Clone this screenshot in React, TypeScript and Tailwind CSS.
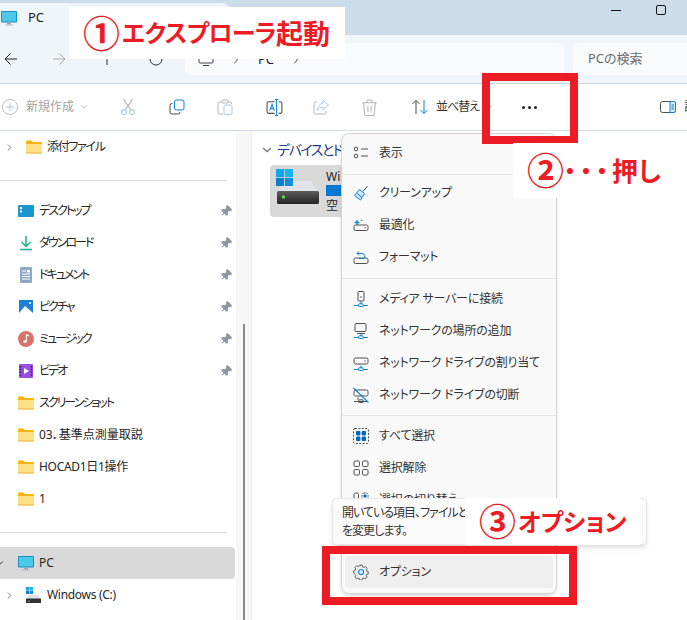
import type { ReactNode } from 'react';
import { ChevronDown, ChevronRight, Pin } from 'lucide-react';

const FONT = "[font-family:'Noto_Sans','Noto_Sans_CJK_JP',sans-serif] [font-feature-settings:'palt']";
const BLUE = '#0a84d8';
const GRAY = '#4f4f4f';

function Ico({ size = 16, children, className }: { size?: number; children: ReactNode; className?: string }) {
    return (
        <svg width={size} height={size} viewBox="0 0 16 16" fill="none" strokeWidth="1" className={`shrink-0 ${className ?? ''}`}>
            {children}
        </svg>
    );
}

function Folder({ size = 16 }: { size?: number }) {
    return (
        <Ico size={size}>
            <path d="M0 2.5C0 2 .4 1.5 1 1.5h4.5L7 3h8c.6 0 1 .4 1 1v1H0z" fill="#f6b40e" />
            <path d="M0 5h16v8.5c0 .6-.4 1-1 1H1c-.6 0-1-.4-1-1z" fill="#fddf86" />
            <path d="M0 13.5h16v.2c0 .5-.4.8-1 .8H1c-.6 0-1-.3-1-.8z" fill="#e9b64a" />
        </Ico>
    );
}

function Monitor({ size = 16 }: { size?: number }) {
    return (
        <Ico size={size}>
            <rect x="0" y="1" width="16" height="11.5" rx="1" fill="#1493c9" />
            <rect x="1" y="2" width="14" height="9.5" fill="#4cc8e8" />
            <rect x="6" y="12.5" width="4" height="2" fill="#9aa5ad" />
            <rect x="4" y="14.5" width="8" height="1" fill="#b6bec4" />
        </Ico>
    );
}

function WinLogo({ size = 16 }: { size?: number }) {
    return (
        <Ico size={size}>
            <rect x="0" y="0" width="7.6" height="7.6" fill="#12a5e8" />
            <rect x="8.4" y="0" width="7.6" height="7.6" fill="#19b3ef" />
            <rect x="0" y="8.4" width="7.6" height="7.6" fill="#0a7fd0" />
            <rect x="8.4" y="8.4" width="7.6" height="7.6" fill="#0f90dc" />
        </Ico>
    );
}

function Drive() {
    return (
        <svg width="42" height="24" viewBox="0 0 42 24" className="shrink-0">
            <defs>
                <linearGradient id="driveBody" x1="0" y1="0" x2="0" y2="1">
                    <stop offset="0%" stopColor="#5c5c5c" />
                    <stop offset="100%" stopColor="#242424" />
                </linearGradient>
            </defs>
            <path d="M7 0h27l7 11H0z" fill="#e2e4ea" />
            <rect x="0" y="10" width="42" height="13" rx="1.5" fill="url(#driveBody)" />
            <circle cx="6.5" cy="16" r="1.7" fill="#4fe04a" />
        </svg>
    );
}

const TinyDrive = () => (
    <svg width="15" height="8" viewBox="0 0 15 8" className="shrink-0">
        <path d="M3 0h9l3 4H0z" fill="#dfe2e6" />
        <rect x="0" y="3.5" width="15" height="4.5" rx=".6" fill="#333" />
        <circle cx="3" cy="6" r=".8" fill="#4fe04a" />
    </svg>
);

const Net = () => (
    <>
        <path d="M8 10.5V13M1 14.5h4.5M10.5 14.5H15" stroke={BLUE} />
        <rect x="5.8" y="12.8" width="4.4" height="2.8" rx=".5" stroke={BLUE} />
    </>
);

const menuIcons: Record<string, ReactNode> = {
    view: (
        <>
            <circle cx="3" cy="4" r="1.8" stroke={GRAY} />
            <circle cx="3" cy="11" r="1.8" stroke={GRAY} />
            <path d="M8 4h7M8 11h7" stroke={GRAY} />
        </>
    ),
    clean: (
        <>
            <path d="M10 6.5 14.5 1" stroke={GRAY} />
            <path d="M6.5 4.5l5 4-4 6.5-6-4.5z" stroke={BLUE} fill="#cfe7fa" />
            <path d="M4 8.5l5 4" stroke={BLUE} />
        </>
    ),
    optimize: (
        <>
            <rect x="1" y="8" width="14" height="5.5" rx="1.5" stroke={GRAY} />
            <circle cx="12" cy="10.7" r=".7" fill={GRAY} />
            <path d="M4 3v5M1.5 5.5h5" stroke={BLUE} strokeWidth="1.3" />
            <path d="M8 3.5h1.5" stroke={BLUE} />
        </>
    ),
    format: (
        <>
            <rect x="1" y="9" width="14" height="5.5" rx="1.5" stroke={GRAY} />
            <path d="M4 4.5h5a3 3 0 0 1 2 5H6M4 4.5l2-2M4 4.5l2 2" stroke={BLUE} />
        </>
    ),
    media: (
        <>
            <rect x="5" y="0.5" width="6" height="9.5" rx="1" stroke={GRAY} />
            <circle cx="8" cy="6" r=".8" fill={GRAY} />
            <Net />
        </>
    ),
    place: (
        <>
            <rect x="2" y="0.5" width="11" height="8" rx="1" stroke={GRAY} />
            <path d="M4 10.5h8" stroke={GRAY} />
            <Net />
        </>
    ),
    map: (
        <>
            <rect x="1" y="3" width="14" height="6" rx="1.5" stroke={GRAY} />
            <circle cx="12" cy="6" r=".7" fill={GRAY} />
            <Net />
        </>
    ),
    cut: (
        <>
            <rect x="1" y="3" width="14" height="6" rx="1.5" stroke={GRAY} />
            <path d="M5 10.5V13M1 14.5h14" stroke={GRAY} />
            <rect x="5.8" y="12.8" width="4.4" height="2.8" rx=".5" stroke={GRAY} />
            <path d="M0.5 1 15.5 15.5" stroke={BLUE} strokeWidth="1.1" />
        </>
    ),
    all: (
        <>
            <rect x="0.5" y="0.5" width="15" height="15" rx="1.5" stroke={GRAY} strokeDasharray="2 1.4" />
            <rect x="3" y="3" width="4.4" height="4.4" rx="1" fill="#0067c0" />
            <rect x="8.6" y="3" width="4.4" height="4.4" rx="1" fill="#0067c0" />
            <rect x="3" y="8.6" width="4.4" height="4.4" rx="1" fill="#0067c0" />
            <rect x="8.6" y="8.6" width="4.4" height="4.4" rx="1" fill="#0067c0" />
        </>
    ),
    none: (
        <>
            <rect x="1" y="1" width="5.5" height="5.5" rx="1.2" stroke={GRAY} />
            <rect x="9.5" y="1" width="5.5" height="5.5" rx="1.2" stroke={GRAY} />
            <rect x="1" y="9.5" width="5.5" height="5.5" rx="1.2" stroke={GRAY} />
            <rect x="9.5" y="9.5" width="5.5" height="5.5" rx="1.2" stroke={GRAY} />
        </>
    ),
    invert: (
        <>
            <rect x="1" y="1" width="4.5" height="5.5" rx="1.5" stroke={GRAY} />
            <rect x="9" y="1" width="6" height="6" rx="2" stroke={GRAY} strokeDasharray="1.5 1" />
            <rect x="10.5" y="2.5" width="3" height="3" rx="1" fill="#0067c0" />
            <rect x="2" y="9.5" width="3.5" height="3.5" rx="1" fill="#0067c0" />
            <rect x="9.5" y="9.5" width="5.5" height="5.5" rx="1.2" stroke={GRAY} />
        </>
    ),
};

function Gear() {
    return (
        <Ico>
            <path
                d="M6.6 1h2.8l.4 1.9 1.4.6 1.6-1 2 2-1 1.6.6 1.4 1.6.5v2.8l-1.6.4-.6 1.4 1 1.6-2 2-1.6-1-1.4.6-.4 1.7H6.6l-.4-1.7-1.4-.6-1.6 1-2-2 1-1.6-.6-1.4L0 9.8V7l1.6-.5.6-1.4-1-1.6 2-2 1.6 1 1.4-.6z"
                stroke={GRAY}
                transform="translate(.8 .3) scale(.9)"
            />
            <circle cx="8" cy="8" r="2.5" stroke={BLUE} strokeWidth="1.2" />
        </Ico>
    );
}

function MenuRow({ icon, label, active }: { icon: ReactNode; label: string; active?: boolean }) {
    return (
        <div className={`flex h-8 items-center gap-[10px] rounded pl-2 ${active ? 'bg-[#efefef]' : ''}`}>
            {icon}
            <span className="whitespace-nowrap text-xs tracking-[-0.2px] text-[#333]">{label}</span>
        </div>
    );
}

function Sep({ className }: { className: string }) {
    return (
        <div className={className}>
            <div className="-mx-[3px] h-px bg-[#e6e6e6]" />
        </div>
    );
}

function ContextMenu() {
    const row = (key: string, label: string) => <MenuRow icon={<Ico>{menuIcons[key]}</Ico>} label={label} />;
    return (
        <div className="absolute left-[341px] top-[133px] h-[461px] w-[216px] rounded-lg border border-[#d4d4d4] bg-[#f9f9f9] px-[3px] pt-[3px] shadow-md">
            {row('view', '表示')}
            <Sep className="pb-[2px] pt-[5px]" />
            {row('clean', 'クリーンアップ')}
            {row('optimize', '最適化')}
            {row('format', 'フォーマット')}
            <Sep className="pb-[4px] pt-[5px]" />
            {row('media', 'メディア サーバーに接続')}
            {row('place', 'ネットワークの場所の追加')}
            {row('map', 'ネットワーク ドライブの割り当て')}
            {row('cut', 'ネットワーク ドライブの切断')}
            <Sep className="pb-[4px] pt-[4px]" />
            {row('all', 'すべて選択')}
            {row('none', '選択解除')}
            {row('invert', '選択の切り替え')}
            <div className="h-[40px]" />
            <MenuRow icon={<Gear />} label="オプション" active />
        </div>
    );
}

function ToolIcon({ children, className }: { children: ReactNode; className: string }) {
    return <div className={`flex shrink-0 justify-center ${className}`}>{children}</div>;
}

function Toolbar() {
    const dim = '#b4b4b4';
    const light = '#a9cbe6';
    return (
        <div className="flex h-[47px] shrink-0 items-center border-b border-[#cfdbe5] bg-white">
            <svg width="18" height="18" viewBox="0 0 18 18" fill="none" className="ml-px shrink-0">
                <circle cx="9" cy="9" r="7.5" stroke="#bdbdbd" />
                <path d="M9 5v8M5 9h8" stroke={light} />
            </svg>
            <span className="ml-[7px] whitespace-nowrap text-xs text-[#a3a3a3]">新規作成</span>
            <ChevronDown size={10} className="ml-[5px] shrink-0 text-[#a3a3a3]" />
            <div className="ml-[14px] h-8 w-px bg-[#e4e4e4]" />
            <ToolIcon className="ml-[13px] w-[24px]">
                <Ico size={18}>
                    <path d="M4 1l6 9M12 1 6 10" stroke={dim} />
                    <circle cx="4.5" cy="12.5" r="2.2" stroke={light} />
                    <circle cx="11.5" cy="12.5" r="2.2" stroke={light} />
                </Ico>
            </ToolIcon>
            <ToolIcon className="ml-[25px] w-[24px]">
                <Ico size={16}>
                    <rect x="5.5" y="1" width="9.5" height="10" rx="2" stroke="#0a84d8" />
                    <path d="M3.5 4.5H3A2 2 0 0 0 1 6.5V13a2 2 0 0 0 2 2h6a2 2 0 0 0 2-2" stroke={GRAY} />
                </Ico>
            </ToolIcon>
            <ToolIcon className="ml-[24px] w-[24px]">
                <Ico size={16}>
                    <path d="M5 3H2.5A1.5 1.5 0 0 0 1 4.5V13.5A1.5 1.5 0 0 0 2.5 15H6M11 3h2.5a1 1 0 0 1 1 1v1" stroke={dim} />
                    <rect x="5" y="1" width="6" height="3" rx="1" stroke={dim} />
                    <rect x="7" y="6" width="8" height="9.5" rx="1.5" stroke={light} />
                </Ico>
            </ToolIcon>
            <ToolIcon className="ml-[25px] w-[24px]">
                <Ico size={17}>
                    <path d="M8 2.5H2.5A1.5 1.5 0 0 0 1 4v8a1.5 1.5 0 0 0 1.5 1.5H8M12 2.5h1.5A1.5 1.5 0 0 1 15 4v8a1.5 1.5 0 0 1-1.5 1.5H12" stroke={GRAY} />
                    <path d="M10 .5V15.5M8.5.5h3M8.5 15.5h3" stroke={BLUE} />
                    <path d="M3.5 11l2.2-6 2.2 6M4.3 9h2.8" stroke={BLUE} />
                </Ico>
            </ToolIcon>
            <ToolIcon className="ml-[23px] w-[24px]">
                <Ico size={16}>
                    <path d="M4 3H2.5A1.5 1.5 0 0 0 1 4.5v9A1.5 1.5 0 0 0 2.5 15h9a1.5 1.5 0 0 0 1.5-1.5V12" stroke={dim} />
                    <path d="M10 1.5 15.5 6 10 10.5V8C7.5 8 5.5 9 4.5 11.5 4.5 7.5 7 4.5 10 4z" stroke={light} />
                </Ico>
            </ToolIcon>
            <ToolIcon className="ml-[24px] w-[24px]">
                <Ico size={17}>
                    <path d="M1 3.5h14M5.5 3.5V2a1 1 0 0 1 1-1h3a1 1 0 0 1 1 1v1.5M2.5 3.5l1 10.5a1.5 1.5 0 0 0 1.5 1.5h6a1.5 1.5 0 0 0 1.5-1.5l1-10.5M6.5 6.5v6M9.5 6.5v6" stroke={dim} />
                </Ico>
            </ToolIcon>
            <div className="ml-[14px] h-8 w-px bg-[#e4e4e4]" />
            <Ico size={16} className="ml-[17px]">
                <path d="M4 15V1.5M.5 5 4 1.5 7.5 5" stroke={GRAY} />
                <path d="M12 1v13.5M8.5 11l3.5 3.5 3.5-3.5" stroke={BLUE} />
            </Ico>
            <span className="ml-[8px] whitespace-nowrap text-xs tracking-[-1px] text-[#333]">並べ替え</span>
            <ChevronDown size={10} className="ml-[5px] shrink-0 text-[#888]" />
            <div className="ml-[28px] mt-[1px] flex shrink-0 gap-[3px]">
                <span className="size-[3px] rounded-full bg-[#222]" />
                <span className="size-[3px] rounded-full bg-[#222]" />
                <span className="size-[3px] rounded-full bg-[#222]" />
            </div>
            <Ico size={16} className="ml-[123px]">
                <rect x="0.5" y="2.5" width="15" height="11" rx="2" stroke={GRAY} />
                <path d="M10 2.5h3.5a2 2 0 0 1 2 2v7a2 2 0 0 1-2 2H10z" stroke={BLUE} fill="#d9edfb" />
                <path d="M11.5 6h2.5M11.5 8h2.5M11.5 10h2.5" stroke={BLUE} />
            </Ico>
            <span className="ml-[8px] whitespace-nowrap text-xs text-[#333]">詳細</span>
        </div>
    );
}

function NavRow({ icon, label, pinned, selected, chevron, track = '' }: { icon: ReactNode; label: string; pinned?: boolean; selected?: boolean; chevron?: boolean; track?: string }) {
    return (
        <div className={`flex h-8 items-center rounded-r ${selected ? 'bg-[#d9d9d9]' : ''} ${chevron ? 'pl-[5px]' : 'pl-[18px]'}`}>
            {chevron && <ChevronRight size={11} className="-ml-[1px] mr-[11px] shrink-0 text-[#777]" strokeWidth={2} />}
            {icon}
            <span className={`ml-[5px] flex-1 whitespace-nowrap text-xs text-[#262626] ${track}`}>{label}</span>
            {pinned && <Pin size={12} className="mr-[3px] shrink-0 rotate-45 fill-[#8d98a3] text-[#8d98a3]" />}
        </div>
    );
}

function Sidebar() {
    const div = (
        <div className="flex h-8 items-center pt-[2px]">
            <div className="h-px w-[227px] bg-[#dcdcdc]" />
        </div>
    );
    const kana = 'tracking-[-2px]';
    return (
        <div className="flex h-full w-[235px] shrink-0 flex-col">
            <NavRow chevron icon={<Folder />} label="添付ファイル" track="tracking-[-1.3px]" />
            {div}
            <NavRow pinned label="デスクトップ" track={kana} icon={
                <Ico>
                    <rect x="0" y="2" width="16" height="12" rx="1" fill="#1a97cf" />
                    <rect x="2" y="4" width="2" height="2" fill="#fff" />
                    <rect x="2" y="7.5" width="2" height="2" fill="#fff" />
                </Ico>
            } />
            <NavRow pinned label="ダウンロード" track={kana} icon={
                <Ico>
                    <path d="M8 1v10M3.5 7 8 11.5 12.5 7" stroke="#21b08f" strokeWidth="1.5" />
                    <path d="M2 14.5h12" stroke="#21b08f" strokeWidth="1.5" />
                </Ico>
            } />
            <NavRow pinned label="ドキュメント" track={kana} icon={
                <Ico>
                    <rect x="2" y="0" width="12" height="16" rx="1" fill="#8fa9c4" />
                    <path d="M4 4h4M4 7h8M4 9.5h8M4 12h8" stroke="#fff" />
                    <rect x="9" y="3" width="3" height="2.5" fill="#fff" />
                </Ico>
            } />
            <NavRow pinned label="ピクチャ" track={kana} icon={
                <Ico>
                    <rect x="1" y="1" width="14" height="14" fill="#1a80d4" />
                    <path d="M1 14 7 7l8 7v1H1z" fill="#fff" />
                    <circle cx="12" cy="4" r="1" fill="#fff" />
                </Ico>
            } />
            <NavRow pinned label="ミュージック" track={kana} icon={
                <Ico>
                    <circle cx="8" cy="8" r="8" fill="#d9746c" />
                    <path d="M8.5 3.5v7" stroke="#fff" strokeWidth="1.2" />
                    <path d="M8.5 3.5 11 5" stroke="#fff" strokeWidth="1.2" />
                    <circle cx="7" cy="10.5" r="1.6" fill="#fff" />
                </Ico>
            } />
            <NavRow pinned label="ビデオ" track={kana} icon={
                <Ico>
                    <rect x="1" y="1" width="14" height="14" rx="1" fill="#9b4fe0" />
                    <path d="M6 5v6l5-3z" fill="#fff" />
                    <path d="M2.5 3v10M13.5 3v10" stroke="#3d1a70" strokeWidth="1.4" strokeDasharray="1.4 1.4" />
                </Ico>
            } />
            <NavRow icon={<Folder />} label="スクリーンショット" track={kana} />
            <NavRow icon={<Folder />} label="03．基準点測量取説" />
            <NavRow icon={<Folder />} label="HOCAD1日1操作" track="tracking-[-0.3px]" />
            <NavRow icon={<Folder />} label="1" />
            {div}
            <NavRow selected label="PC" icon={
                <div className="relative">
                    <ChevronDown size={10} strokeWidth={2.4} className="absolute -left-[23px] top-[3px] text-[#333]" />
                    <Monitor />
                </div>
            } />
            <NavRow chevron label="Windows (C:)" track="tracking-[-0.3px]" icon={
                <div className="flex size-4 shrink-0 flex-col">
                    <WinLogo size={7} />
                    <div className="mt-[1px]"><TinyDrive /></div>
                </div>
            } />
        </div>
    );
}

function Content() {
    return (
        <div className="min-w-0 flex-1 overflow-hidden pl-[8px]">
            <div className="flex h-[34px] w-[81px] items-center overflow-hidden whitespace-nowrap pt-[3px] text-sm tracking-[-1.5px] text-[#1c3b82]">
                <ChevronDown size={14} className="mr-[3px] shrink-0 text-[#777]" />
                デバイスとドライブ
            </div>
            <div className="ml-[10px] flex h-[52px] w-[80px] overflow-hidden rounded-sm bg-[#d9d9d9] pl-[6px] pt-[4px]">
                <div className="relative h-[38px] w-[44px] shrink-0">
                    <div className="absolute left-[1px] top-[12px]"><Drive /></div>
                    <div className="absolute left-0 top-0"><WinLogo size={17} /></div>
                </div>
                <div className="ml-[6px] flex flex-col text-xs text-[#222]">
                    <span className="h-[16px] leading-[16px]">Wi</span>
                    <div className="h-[11px] w-[200px] bg-[#0078d4]" />
                    <span className="mt-[1px] leading-[18px]">空</span>
                </div>
            </div>
        </div>
    );
}

export default function App() {
    return (
        <div className={`relative h-[620px] w-[687px] overflow-hidden bg-white ${FONT}`}>
            {/* title bar */}
            <div className="flex h-[35px] items-end bg-[#cbdcea]">
                <div className="flex h-[32px] w-[230px] items-center rounded-tr-lg bg-[#f0f5f9] pb-[2px] pl-[1px]">
                    <Monitor />
                    <span className="ml-[11px] text-[13px] text-[#222]">PC</span>
                </div>
                <div className="ml-[381px] flex self-start pt-[5px]">
                    <div className="mt-[5px] h-px w-[10px] bg-[#111]" />
                    <div className="ml-[35px] size-[10px] rounded-[2px] border border-[#111]" />
                </div>
            </div>
            {/* address row */}
            <div className="flex h-[49px] items-center border-b border-[#c6d5e2] bg-[#f0f5f9]">
                <svg width="14" height="14" viewBox="0 0 14 14" fill="none" className="ml-[4px] shrink-0">
                    <path d="M13 7H1M6.5 1.5 1 7l5.5 5.5" stroke="#222" />
                </svg>
                <svg width="14" height="14" viewBox="0 0 14 14" fill="none" className="ml-[34px] shrink-0">
                    <path d="M1 7h12M7.5 1.5 13 7l-5.5 5.5" stroke="#aaa" />
                </svg>
                <svg width="14" height="14" viewBox="0 0 14 14" fill="none" className="ml-[34px] shrink-0">
                    <path d="M7 13V1" stroke="#333" />
                </svg>
                <svg width="14" height="14" viewBox="0 0 14 14" fill="none" className="ml-[35px] shrink-0">
                    <circle cx="7" cy="7" r="6" stroke="#333" />
                </svg>
                <div className="ml-[22px] flex h-[32px] w-[379px] shrink-0 items-center rounded-md bg-[#f9fbfd] pl-[13px] pt-[2px]">
                    <svg width="16" height="14" viewBox="0 0 16 14" fill="none" className="shrink-0">
                        <rect x="1" y="1" width="14" height="9" rx="1" stroke="#444" />
                        <path d="M5 12.5h6" stroke="#444" />
                    </svg>
                    <ChevronRight size={12} className="ml-[16px] shrink-0 text-[#444]" />
                    <span className="ml-[16px] text-[13px] text-[#222]">PC</span>
                    <ChevronRight size={12} className="ml-[16px] shrink-0 text-[#444]" />
                </div>
                <div className="ml-[9px] flex h-[32px] flex-1 items-center rounded-l-md bg-[#f9fbfd] pl-[15px] text-[13px] text-[#6b6b6b]">
                    PCの検索
                </div>
            </div>
            <Toolbar />
            {/* body */}
            <div className="flex h-[489px]">
                <Sidebar />
                <div className="ml-px flex h-full w-[16px] shrink-0 justify-center border-r border-[#f0f0f0] bg-[#f7f7f7] pt-[193px]">
                    <div className="h-full w-[2px] bg-[#8a8a8a]" />
                </div>
                <Content />
            </div>

            <ContextMenu />

            {/* tooltip */}
            <div className="absolute left-[332px] top-[498px] h-[47px] w-[315px] rounded border border-[#e8e8e8] bg-[#fbfbfb] py-[5px] pl-[9px] text-xs leading-[18px] tracking-[-1px] text-[#333] shadow-md">
                <div>開いている項目、ファイルと</div>
                <div>を変更します。</div>
            </div>

            {/* red annotations */}
            <div className="absolute left-[69px] top-[7px] flex h-[52px] w-[276px] items-center bg-white pl-[14px] font-bold leading-none text-[#ed1c24]">
                <span className="text-[37px]">①</span>
                <span className="ml-[2px] text-2xl tracking-[-0.6px]">エクスプローラ</span>
                <span className="text-[27px]">起動</span>
            </div>
            <div className="absolute left-[482px] top-[73px] h-[71px] w-[96px] border-[8px] border-[#ed1c24]" />
            <div className="absolute left-[513px] top-[143px] flex h-[55px] w-[174px] items-center bg-white pl-[14px] font-bold leading-none text-[#ed1c24]">
                <span className="text-[37px]">②</span>
                <span className="text-2xl tracking-[4px]">・・・</span>
                <span className="text-[26px]">押し</span>
            </div>
            <div className="absolute left-[465px] top-[498px] flex h-[47px] w-[175px] items-center bg-white pl-[14px] font-bold leading-none text-[#ed1c24]">
                <span className="text-[37px]">③</span>
                <span className="ml-[2px] text-2xl">オプション</span>
            </div>
            <div className="absolute left-[322px] top-[546px] h-[59px] w-[255px] border-[8px] border-[#ed1c24]" />
        </div>
    );
}
